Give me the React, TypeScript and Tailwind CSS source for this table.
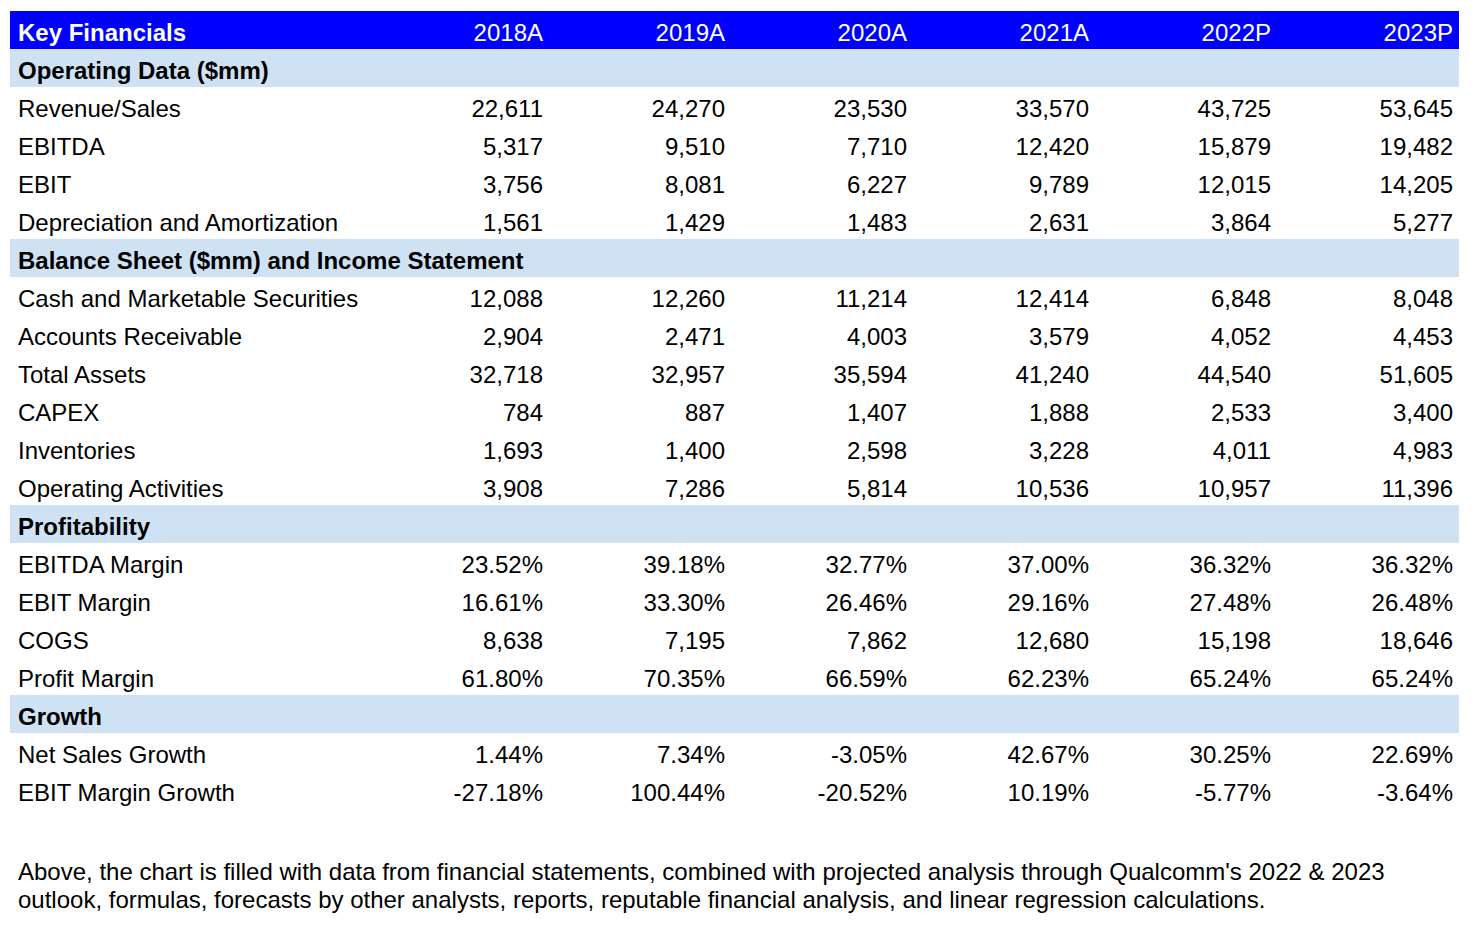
import React from "react";

type Row = { label: string; values?: string[]; section?: boolean };

const years = ["2018A", "2019A", "2020A", "2021A", "2022P", "2023P"];

const rows: Row[] = [
  { label: "Operating Data ($mm)", section: true },
  { label: "Revenue/Sales", values: ["22,611", "24,270", "23,530", "33,570", "43,725", "53,645"] },
  { label: "EBITDA", values: ["5,317", "9,510", "7,710", "12,420", "15,879", "19,482"] },
  { label: "EBIT", values: ["3,756", "8,081", "6,227", "9,789", "12,015", "14,205"] },
  { label: "Depreciation and Amortization", values: ["1,561", "1,429", "1,483", "2,631", "3,864", "5,277"] },
  { label: "Balance Sheet ($mm) and Income Statement", section: true },
  { label: "Cash and Marketable Securities", values: ["12,088", "12,260", "11,214", "12,414", "6,848", "8,048"] },
  { label: "Accounts Receivable", values: ["2,904", "2,471", "4,003", "3,579", "4,052", "4,453"] },
  { label: "Total Assets", values: ["32,718", "32,957", "35,594", "41,240", "44,540", "51,605"] },
  { label: "CAPEX", values: ["784", "887", "1,407", "1,888", "2,533", "3,400"] },
  { label: "Inventories", values: ["1,693", "1,400", "2,598", "3,228", "4,011", "4,983"] },
  { label: "Operating Activities", values: ["3,908", "7,286", "5,814", "10,536", "10,957", "11,396"] },
  { label: "Profitability", section: true },
  { label: "EBITDA Margin", values: ["23.52%", "39.18%", "32.77%", "37.00%", "36.32%", "36.32%"] },
  { label: "EBIT Margin", values: ["16.61%", "33.30%", "26.46%", "29.16%", "27.48%", "26.48%"] },
  { label: "COGS", values: ["8,638", "7,195", "7,862", "12,680", "15,198", "18,646"] },
  { label: "Profit Margin", values: ["61.80%", "70.35%", "66.59%", "62.23%", "65.24%", "65.24%"] },
  { label: "Growth", section: true },
  { label: "Net Sales Growth", values: ["1.44%", "7.34%", "-3.05%", "42.67%", "30.25%", "22.69%"] },
  { label: "EBIT Margin Growth", values: ["-27.18%", "100.44%", "-20.52%", "10.19%", "-5.77%", "-3.64%"] },
];

const grid = "grid grid-cols-[357px_repeat(6,182px)] h-[38px] items-end pb-[2.5px]";

export default function App() {
  return (
    <div className="bg-white min-h-screen pt-[11px] pl-[10px] text-[24px] leading-[1.15] text-black font-['Liberation_Sans',Arial,sans-serif]">
      <div className="w-[1449px]">
        <div className={`${grid} bg-[#0000ff] text-white`}>
          <div className="pl-2 font-bold">Key Financials</div>
          {years.map((y) => (
            <div key={y} className="text-right pr-[6px]">
              {y}
            </div>
          ))}
        </div>
        {rows.map((r) =>
          r.section ? (
            <div key={r.label} className="h-[38px] flex items-end pb-[2.5px] bg-[#cfe2f3] font-bold pl-2">
              {r.label}
            </div>
          ) : (
            <div key={r.label} className={grid}>
              <div className="pl-2 whitespace-nowrap">{r.label}</div>
              {r.values!.map((v, i) => (
                <div key={i} className="text-right pr-[6px]">
                  {v}
                </div>
              ))}
            </div>
          )
        )}
      </div>
      <p className="mt-[49px] pl-2 leading-[28px] w-[1410px]">
        Above, the chart is filled with data from financial statements, combined with projected analysis through
        Qualcomm's 2022 &amp; 2023 outlook, formulas, forecasts by other analysts, reports, reputable financial
        analysis, and linear regression calculations.
      </p>
    </div>
  );
}
